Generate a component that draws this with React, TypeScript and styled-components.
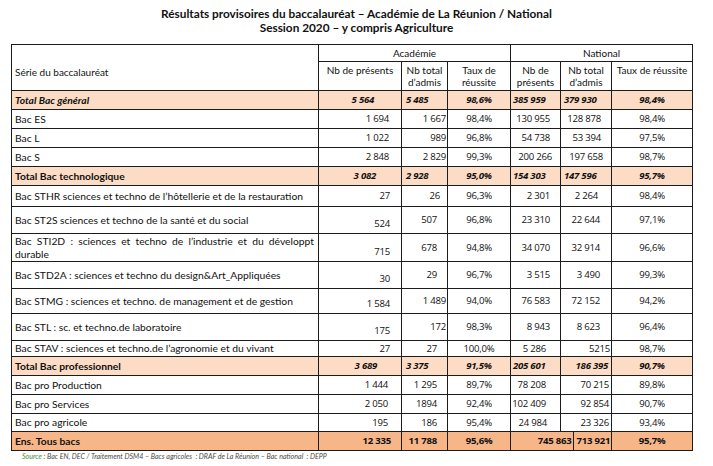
import React from "react";
import styled, { createGlobalStyle, css } from "styled-components";

const Global = createGlobalStyle`
  html, body { margin: 0; padding: 0; background: #fff; }
  body { font-family: "Lato", "Liberation Sans", sans-serif; color: #111; }
`;

const Page = styled.div`
  width: 713px;
  height: 466px;
  padding: 7px 0 0 11px;
  box-sizing: border-box;
  display: flex;
  flex-direction: column;
`;

const Title = styled.h1`
  margin: 0 0 9px -11px;
  width: 713px;
  text-align: center;
  font-family: "Lato", "Liberation Sans", sans-serif;
  font-weight: 700;
  font-size: 11.8px;
  line-height: 14px;
  color: #111;
`;

const Table = styled.table`
  border-collapse: collapse;
  table-layout: fixed;
  width: 681px;
  font-size: 10px;
`;

type Kind = "normal" | "totalItalic" | "total" | "ens";

const bg = (k: Kind) =>
  k === "ens" ? "#f6b688" : k === "normal" ? "#ffffff" : "#fcdcc4";

const Row = styled.tr<{ $h: number; $kind: Kind }>`
  height: ${(p) => p.$h}px;
  background: ${(p) => bg(p.$kind)};
`;

const cellBase = css`
  border: 1px solid #1c1c1c;
  padding: 0;
  white-space: nowrap;
  overflow: visible;
`;

const HeadCell = styled.th<{ $left?: boolean; $top?: boolean }>`
  ${cellBase};
  font-weight: 400;
  font-size: 10px;
  line-height: 12px;
  text-align: ${(p) => (p.$left ? "left" : "center")};
  vertical-align: ${(p) => (p.$top ? "top" : "middle")};
  padding: ${(p) => (p.$left ? "8px 0 0 3px" : p.$top ? "2px 1px 0" : "0 1px")};
  white-space: normal;
`;

const GroupCell = styled.th`
  ${cellBase};
  font-weight: 400;
  font-size: 10px;
  text-align: center;
  vertical-align: middle;
`;

const LabelCell = styled.td<{ $kind: Kind; $wrap?: boolean }>`
  ${cellBase};
  padding: 0 4px 0 3px;
  font-size: 10.3px;
  line-height: 13px;
  text-align: ${(p) => (p.$wrap ? "justify" : "left")};
  text-align-last: left;
  white-space: ${(p) => (p.$wrap ? "normal" : "nowrap")};
  font-weight: ${(p) => (p.$kind === "normal" ? 400 : 700)};
  font-style: ${(p) => (p.$kind === "totalItalic" ? "italic" : "normal")};
`;

const NumCell = styled.td<{
  $kind: Kind;
  $align: string;
  $pad: number;
  $bottom: boolean;
  $hideRight?: boolean;
  $hideLeft?: boolean;
}>`
  ${cellBase};
  font-family: "Open Sans", "Liberation Sans", sans-serif;
  font-size: 9.6px;
  letter-spacing: -0.25px;
  line-height: 12px;
  text-align: ${(p) => p.$align};
  vertical-align: ${(p) => (p.$bottom ? "bottom" : "middle")};
  padding-bottom: ${(p) => (p.$bottom ? "3px" : "0")};
  ${(p) =>
    p.$align === "right"
      ? `padding-right: ${p.$pad}px;`
      : p.$align === "left"
      ? `padding-left: ${p.$pad}px;`
      : ""}
  font-weight: ${(p) => (p.$kind === "normal" ? 400 : 700)};
  font-style: ${(p) =>
    p.$kind === "totalItalic" || p.$kind === "total" ? "italic" : "normal"};
  ${(p) => (p.$hideRight ? "border-right-style: hidden;" : "")}
  ${(p) => (p.$hideLeft ? "border-left-style: hidden;" : "")}
`;

const ShiftedEdge = styled.span`
  display: inline-block;
  margin-right: -13px;
  padding-right: 1px;
  border-right: 1px solid #1c1c1c;
  line-height: 18px;
`;

const Source = styled.p`
  margin: 1px 0 0 11px;
  font-family: "Lato", "Liberation Sans", sans-serif;
  font-style: italic;
  font-size: 7.1px;
  color: #4a4a4a;
`;

const SourceLabel = styled.span`
  color: #3f8f2c;
`;

type RowData = {
  label: string;
  kind: Kind;
  h: number;
  vals: string[];
  spec: string;
  wrap?: boolean;
};

const rows: RowData[] = [
  { label: "Total Bac général", kind: "totalItalic", h: 19, vals: ["5 564", "5 485", "98,6%", "385 959", "379 930", "98,4%"], spec: "r27 l4 c l2 l3 c" },
  { label: "Bac ES", kind: "normal", h: 19, vals: ["1 694", "1 667", "98,4%", "130 955", "128 878", "98,4%"], spec: "r12 r1 c r10 r10 c" },
  { label: "Bac L", kind: "normal", h: 19, vals: ["1 022", "989", "96,8%", "54 738", "53 394", "97,5%"], spec: "r12 r1 c r10 r10 c" },
  { label: "Bac S", kind: "normal", h: 19, vals: ["2 848", "2 829", "99,3%", "200 266", "197 658", "98,7%"], spec: "r12 r1 c r8 r8 c" },
  { label: "Total Bac technologique", kind: "total", h: 19, vals: ["3 082", "2 928", "95,0%", "154 303", "147 596", "95,7%"], spec: "r25 l4 c l2 l3 c" },
  { label: "Bac STHR sciences et techno de l’hôtellerie et de la restauration", kind: "normal", h: 21, vals: ["27", "26", "96,3%", "2 301", "2 264", "98,4%"], spec: "r11 r7 c r10 r13 c" },
  { label: "Bac ST2S sciences et techno de la santé et du social", kind: "normal", h: 27, vals: ["524", "507", "96,8%", "23 310", "22 644", "97,1%"], spec: "r11b r10 c r10 r11 c" },
  { label: "Bac STI2D : sciences et techno de l’industrie et du développt durable", kind: "normal", h: 28, wrap: true, vals: ["715", "678", "94,8%", "34 070", "32 914", "96,6%"], spec: "r11b r10 c r10 r11 c" },
  { label: "Bac STD2A : sciences et techno du design&Art_Appliquées", kind: "normal", h: 27, vals: ["30", "29", "96,7%", "3 515", "3 490", "99,3%"], spec: "r11b r10 c r10 r11 c" },
  { label: "Bac STMG : sciences et techno. de management et de gestion", kind: "normal", h: 25, vals: ["1 584", "1 489", "94,0%", "76 583", "72 152", "94,2%"], spec: "r11b r1 c r10 r11 c" },
  { label: "Bac STL : sc. et techno.de laboratoire", kind: "normal", h: 27, vals: ["175", "172", "98,3%", "8 943", "8 623", "96,4%"], spec: "r11b r1 c r10 r11 c" },
  { label: "Bac STAV : sciences et techno.de l’agronomie et du vivant", kind: "normal", h: 16, vals: ["27", "27", "100,0%", "5 286", "5215", "98,7%"], spec: "r11 r10 c r14 r1 c" },
  { label: "Total Bac professionnel", kind: "total", h: 19, vals: ["3 689", "3 375", "91,5%", "205 601", "186 395", "90,7%"], spec: "r24 l4 c l2 r3 c" },
  { label: "Bac pro Production", kind: "normal", h: 19, vals: ["1 444", "1 295", "89,7%", "78 208", "70 215", "89,8%"], spec: "r13 r10 c r14 r2 c" },
  { label: "Bac pro Services", kind: "normal", h: 19, vals: ["2 050", "1894", "92,4%", "102 409", "92 854", "90,7%"], spec: "r13 r10 c r14 r2 c" },
  { label: "Bac pro agricole", kind: "normal", h: 18, vals: ["195", "186", "95,4%", "24 984", "23 326", "93,4%"], spec: "r13 r10 c r13 r2 c" },
  { label: "Ens. Tous bacs", kind: "ens", h: 18, vals: ["12 335", "11 788", "95,6%", "745 863", "713 921", "95,7%"], spec: "r10 r10 c r0 l16 c" },
];

const parseSpec = (s: string) =>
  s.split(" ").map((t) => ({
    align: t[0] === "r" ? "right" : t[0] === "l" ? "left" : "center",
    pad: parseInt(t.slice(1), 10) || 0,
    bottom: t.endsWith("b"),
  }));

const widths = [307, 83, 46, 63, 50, 51, 81];

export default function App() {
  return (
    <>
      <Global />
      <Page>
        <Title>
          Résultats provisoires du baccalauréat – Académie de La Réunion / National
          <br />
          Session 2020 – y compris Agriculture
        </Title>
        <Table>
          <colgroup>
            {widths.map((w, i) => (
              <col key={i} style={{ width: w }} />
            ))}
          </colgroup>
          <thead>
            <Row $h={17} $kind="normal">
              <HeadCell rowSpan={2} $left>
                Série du baccalauréat
              </HeadCell>
              <GroupCell colSpan={3}>Académie</GroupCell>
              <GroupCell colSpan={3}>National</GroupCell>
            </Row>
            <Row $h={29} $kind="normal">
              <HeadCell $top>Nb de présents</HeadCell>
              <HeadCell $top>
                Nb total
                <br />
                d’admis
              </HeadCell>
              <HeadCell $top>
                Taux de
                <br />
                réussite
              </HeadCell>
              <HeadCell $top>
                Nb de
                <br />
                présents
              </HeadCell>
              <HeadCell $top>
                Nb total
                <br />
                d’admis
              </HeadCell>
              <HeadCell $top>Taux de réussite</HeadCell>
            </Row>
          </thead>
          <tbody>
            {rows.map((r) => {
              const spec = parseSpec(r.spec);
              const isEns = r.kind === "ens";
              return (
                <Row key={r.label} $h={r.h} $kind={r.kind}>
                  <LabelCell $kind={r.kind} $wrap={r.wrap}>
                    {r.label}
                  </LabelCell>
                  {r.vals.map((v, i) => (
                    <NumCell
                      key={i}
                      $kind={r.kind}
                      $align={spec[i].align}
                      $pad={spec[i].pad}
                      $bottom={spec[i].bottom}
                      $hideRight={isEns && i === 3}
                      $hideLeft={isEns && i === 4}
                    >
                      {isEns && i === 3 ? <ShiftedEdge>{v}</ShiftedEdge> : v}
                    </NumCell>
                  ))}
                </Row>
              );
            })}
          </tbody>
        </Table>
        <Source>
          <SourceLabel>Source</SourceLabel> : Bac EN, DEC / Traitement DSM4 – Bacs agricoles&nbsp; : DRAF de La Réunion – Bac national&nbsp; : DEPP
        </Source>
      </Page>
    </>
  );
}
